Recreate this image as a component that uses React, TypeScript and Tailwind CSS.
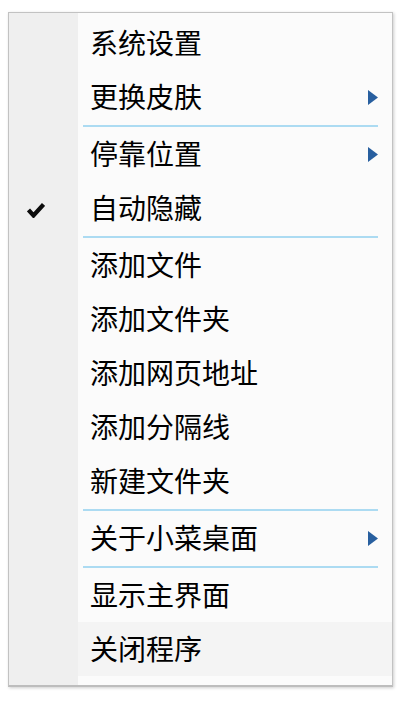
import React from 'react';

type Item = { label: string; sub?: boolean; checked?: boolean; hover?: boolean };

// groups separated by blue rules
const GROUPS: Item[][] = [
  [{ label: '系统设置' }, { label: '更换皮肤', sub: true }],
  [{ label: '停靠位置', sub: true }, { label: '自动隐藏', checked: true }],
  [
    { label: '添加文件' },
    { label: '添加文件夹' },
    { label: '添加网页地址' },
    { label: '添加分隔线' },
    { label: '新建文件夹' },
  ],
  [{ label: '关于小菜桌面', sub: true }],
  [{ label: '显示主界面' }, { label: '关闭程序', hover: true }],
];

const Check = () => (
  <svg width="18" height="16" viewBox="0 0 18 16">
    <path d="M1.5 8 L6.5 13.5 L16.5 2.5" fill="none" stroke="#0d0d0d" strokeWidth="4.2" />
  </svg>
);

const Arrow = () => (
  <svg width="10" height="15" viewBox="0 0 10 15">
    <path d="M0 0 L10 7.5 L0 15 Z" fill="#285f9f" />
  </svg>
);

const MenuRow = ({ item, last }: { item: Item; last: boolean }) => (
  <div className={`flex ${last ? 'h-[63px] pb-[9px]' : 'h-[54px]'}`}>
    <div className="w-[69px] shrink-0 flex items-center pl-[18px] pt-[3px]">
      {item.checked && <Check />}
    </div>
    <div
      className={`flex-1 flex items-center pl-[12px] pr-[14px] ${item.hover ? 'bg-[#f4f4f4]' : ''}`}
    >
      <span className="flex-1 text-[28px] leading-none text-black -mt-[2px]">{item.label}</span>
      {item.sub && <Arrow />}
    </div>
  </div>
);

export default function App() {
  return (
    <div className="w-[400px] h-[701px] bg-white pl-[8px] pt-[12px]" style={{ fontFamily: '"Noto Sans CJK SC", "Noto Sans", sans-serif' }}>
      <div className="w-[385px] flex flex-col border border-[#c2c2c2] border-b-2 border-b-[#bdbdbd] pt-[3px] bg-[linear-gradient(to_right,#efefef_69px,#fbfbfb_69px)] shadow-[1px_1px_3px_rgba(0,0,0,0.2)]">
        {GROUPS.map((g, gi) => (
          <React.Fragment key={gi}>
            {gi > 0 && (
              <div className="h-[3px] flex items-center">
                <div className="ml-[74px] mr-[14px] flex-1 h-[2px] bg-[#acdbf2]" />
              </div>
            )}
            {g.map((it, ii) => (
              <MenuRow key={it.label} item={it} last={gi === GROUPS.length - 1 && ii === g.length - 1} />
            ))}
          </React.Fragment>
        ))}
      </div>
    </div>
  );
}
